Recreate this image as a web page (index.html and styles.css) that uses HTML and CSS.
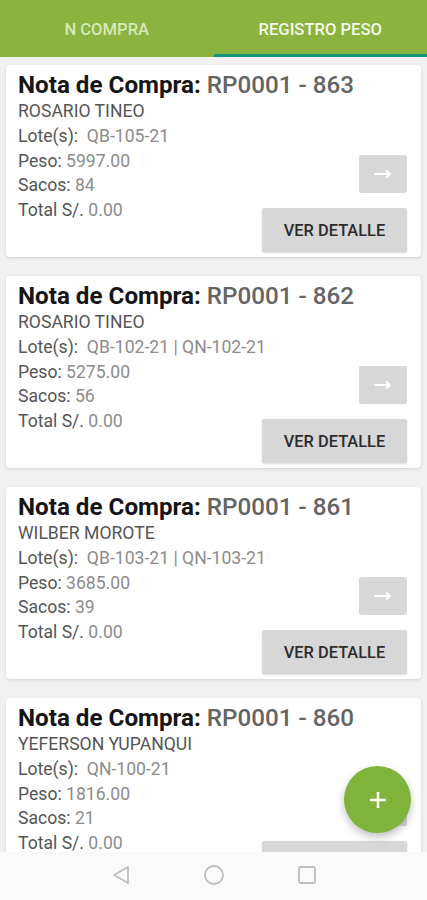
FILE: index.html
```html
<!DOCTYPE html>
<html lang="es">
<head>
  <meta charset="UTF-8">
  <meta name="viewport" content="width=device-width, initial-scale=1.0">
  <title>Registro Peso</title>
  <link rel="stylesheet" href="styles.css">
</head>
<body>

  <div class="app">
    <div class="tabs">
      <div class="tab">N COMPRA</div>
      <div class="tab active">REGISTRO PESO</div>
    </div>

    <div class="list">
      <div class="card">
        <div class="card-title">Nota de Compra: <span>RP0001 - 863</span></div>
        <div class="card-row">
          <div class="info">
            <div class="name">ROSARIO TINEO</div>
            <div>Lote(s): <span>&nbsp;QB-105-21</span></div>
            <div>Peso: <span>5997.00</span></div>
            <div>Sacos: <span>84</span></div>
            <div>Total S/. <span>0.00</span></div>
          </div>
          <div class="actions">
            <button class="arrow-btn"><svg width="20" height="10" viewBox="0 0 20 10"><path d="M1 5h16M13 1.5l4 3.5-4 3.5" fill="none" stroke="#fff" stroke-width="2"/></svg></button>
            <button class="detail-btn">VER DETALLE</button>
          </div>
        </div>
      </div>

      <div class="card">
        <div class="card-title">Nota de Compra: <span>RP0001 - 862</span></div>
        <div class="card-row">
          <div class="info">
            <div class="name">ROSARIO TINEO</div>
            <div>Lote(s): <span>&nbsp;QB-102-21 | QN-102-21</span></div>
            <div>Peso: <span>5275.00</span></div>
            <div>Sacos: <span>56</span></div>
            <div>Total S/. <span>0.00</span></div>
          </div>
          <div class="actions">
            <button class="arrow-btn"><svg width="20" height="10" viewBox="0 0 20 10"><path d="M1 5h16M13 1.5l4 3.5-4 3.5" fill="none" stroke="#fff" stroke-width="2"/></svg></button>
            <button class="detail-btn">VER DETALLE</button>
          </div>
        </div>
      </div>

      <div class="card">
        <div class="card-title">Nota de Compra: <span>RP0001 - 861</span></div>
        <div class="card-row">
          <div class="info">
            <div class="name">WILBER MOROTE</div>
            <div>Lote(s): <span>&nbsp;QB-103-21 | QN-103-21</span></div>
            <div>Peso: <span>3685.00</span></div>
            <div>Sacos: <span>39</span></div>
            <div>Total S/. <span>0.00</span></div>
          </div>
          <div class="actions">
            <button class="arrow-btn"><svg width="20" height="10" viewBox="0 0 20 10"><path d="M1 5h16M13 1.5l4 3.5-4 3.5" fill="none" stroke="#fff" stroke-width="2"/></svg></button>
            <button class="detail-btn">VER DETALLE</button>
          </div>
        </div>
      </div>

      <div class="card">
        <div class="card-title">Nota de Compra: <span>RP0001 - 860</span></div>
        <div class="card-row">
          <div class="info">
            <div class="name">YEFERSON YUPANQUI</div>
            <div>Lote(s): <span>&nbsp;QN-100-21</span></div>
            <div>Peso: <span>1816.00</span></div>
            <div>Sacos: <span>21</span></div>
            <div>Total S/. <span>0.00</span></div>
          </div>
          <div class="actions">
            <button class="arrow-btn"><svg width="20" height="10" viewBox="0 0 20 10"><path d="M1 5h16M13 1.5l4 3.5-4 3.5" fill="none" stroke="#fff" stroke-width="2"/></svg></button>
            <button class="detail-btn"></button>
          </div>
        </div>
      </div>
    </div>

    <button class="fab">
      <svg width="22" height="22" viewBox="0 0 22 22"><path d="M11 3v16M3 11h16" stroke="#fff" stroke-width="2.6"/></svg>
    </button>

    <!-- system nav -->
    <div class="navbar">
      <svg width="20" height="20" viewBox="0 0 20 20"><path d="M17 2v16L3 10z" fill="none" stroke="#bdbdbd" stroke-width="1.8" stroke-linejoin="round"/></svg>
      <svg width="22" height="22" viewBox="0 0 22 22"><circle cx="11" cy="11" r="9" fill="none" stroke="#bdbdbd" stroke-width="1.8"/></svg>
      <svg width="20" height="20" viewBox="0 0 20 20"><rect x="2" y="2" width="16" height="16" rx="1.5" fill="none" stroke="#bdbdbd" stroke-width="1.8"/></svg>
    </div>
  </div>

</body>
</html>
```

FILE: styles.css
```css
:root {
  --green: #8ab43f;
  --indicator: #17957a;
  --page-bg: #f1f1f1;
  --btn-bg: #d7d7d7;
}

* {
  box-sizing: border-box;
  margin: 0;
  padding: 0;
}

body {
  font-family: Roboto, 'Noto Sans', sans-serif;
  background: var(--page-bg);
  width: 427px;
  height: 900px;
  overflow: hidden;
}

.app {
  position: relative;
  height: 900px;
  display: flex;
  flex-direction: column;
}

.tabs {
  display: flex;
  height: 57px;
  background: var(--green);
  flex-shrink: 0;
}

.tab {
  flex: 1;
  display: flex;
  align-items: center;
  justify-content: center;
  font-size: 16.6px;
  font-weight: 500;
  color: #d6e8bc;
  padding-top: 1px;
}

.tab.active {
  color: #f4f9ec;
  border-bottom: 3px solid var(--indicator);
  padding-top: 4px;
}

.list {
  flex: 1;
  overflow: hidden;
  padding: 8px 6px 0;
}

.card {
  background: #fff;
  border-radius: 4px;
  box-shadow: 0 1px 3px rgba(0, 0, 0, 0.14);
  padding: 6px 14px 5px 12px;
  margin-bottom: 19px;
}

.card-title {
  font-size: 24.2px;
  line-height: 28px;
  font-weight: 700;
  color: #151515;
  white-space: nowrap;
}

.card-title span {
  font-weight: 500;
  color: #646464;
}

.card-row {
  display: flex;
  justify-content: space-between;
}

.info {
  flex: 1;
  min-width: 0;
  font-size: 17.6px;
  line-height: 24.8px;
  color: #555;
  white-space: nowrap;
}

.info span {
  color: #8c8c8c;
}

.actions {
  flex-shrink: 0;
  display: flex;
  flex-direction: column;
  align-items: flex-end;
  justify-content: flex-end;
  gap: 15px;
  min-height: 153px;
}

.arrow-btn {
  width: 48px;
  height: 38px;
  border: none;
  border-radius: 2px;
  background: var(--btn-bg);
  display: flex;
  align-items: center;
  justify-content: center;
}

.detail-btn {
  width: 145px;
  height: 44px;
  border: none;
  border-radius: 2px;
  background: var(--btn-bg);
  font-family: Roboto, sans-serif;
  font-size: 16.4px;
  font-weight: 500;
  color: #2c2c2c;
  box-shadow: 0 1px 2px rgba(0, 0, 0, 0.15);
}

.fab {
  position: absolute;
  right: 16px;
  bottom: 67px;
  width: 67px;
  height: 67px;
  border-radius: 50%;
  border: none;
  background: #7fb33c;
  box-shadow: 0 4px 8px rgba(0, 0, 0, 0.25);
  display: flex;
  align-items: center;
  justify-content: center;
}

.navbar {
  height: 48px;
  flex-shrink: 0;
  background: #fafafa;
  display: flex;
  align-items: center;
  justify-content: center;
  gap: 72px;
  padding-bottom: 2px;
}
```
